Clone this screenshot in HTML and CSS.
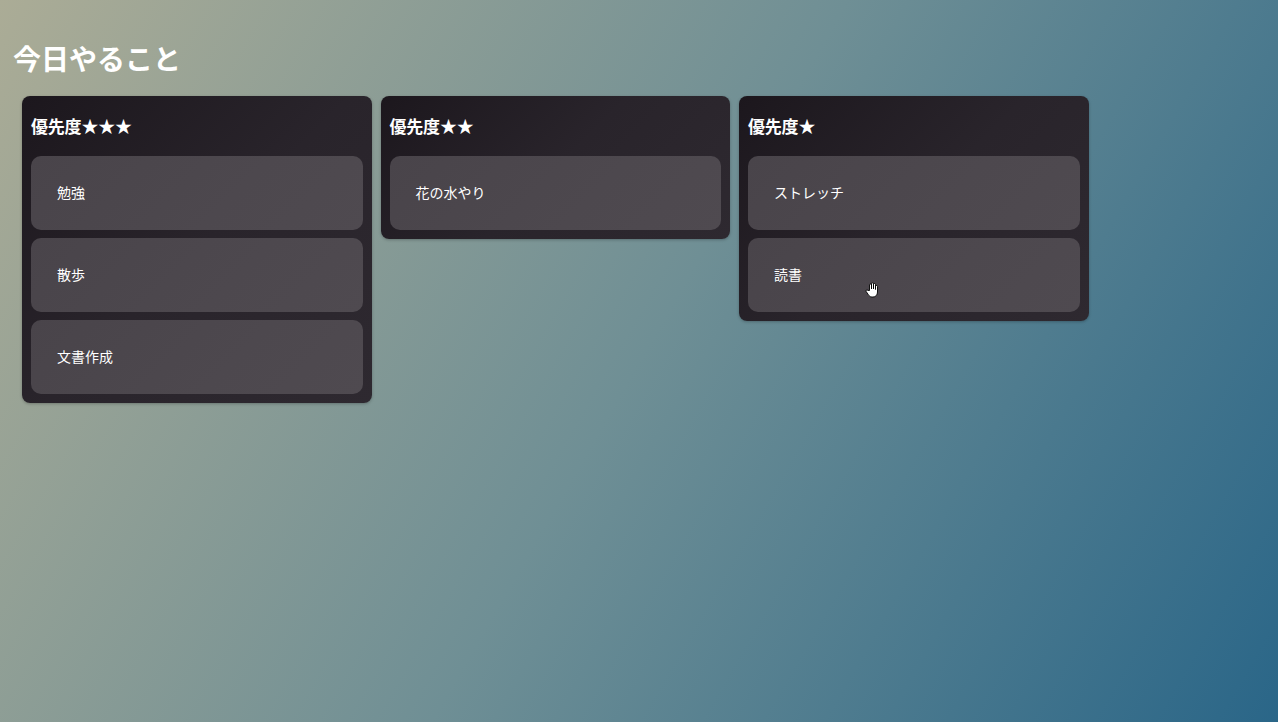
FILE: index.html
```html
<!DOCTYPE html>
<html lang="ja">
<head>
<meta charset="utf-8">
<title>今日やること</title>
<link rel="stylesheet" href="styles.css">
</head>
<body>
<main class="page">
  <h1 class="title">今日やること</h1>
  <div class="board">
    <section class="column">
      <h2 class="column-title">優先度★★★</h2>
      <div class="task">勉強</div>
      <div class="task">散歩</div>
      <div class="task">文書作成</div>
    </section>
    <section class="column">
      <h2 class="column-title">優先度★★</h2>
      <div class="task">花の水やり</div>
    </section>
    <section class="column">
      <h2 class="column-title">優先度★</h2>
      <div class="task">ストレッチ</div>
      <div class="task">読書
        <svg class="cursor" width="14" height="16" viewBox="0 0 14 16" aria-hidden="true">
          <path d="M4.5 8.5 V3 a1 1 0 0 1 2 0 V7 V1.8 a1 1 0 0 1 2 0 V7 V2.5 a1 1 0 0 1 2 0 V7.5 V4.5 a1 1 0 0 1 2 0 V10 c0 3 -1.8 5 -4.5 5 h-1 c-1.8 0 -2.8 -1 -3.8 -2.6 L1.2 9.6 a1 1 0 0 1 1.6 -1.2 Z" fill="#fff" stroke="#000" stroke-width="0.9" stroke-linejoin="round"/>
        </svg>
      </div>
    </section>
  </div>
</main>
</body>
</html>
```
FILE: styles.css
```css
html {
  height: 100%;
  background: linear-gradient(120deg, #abac96 0%, #6f8f95 50%, #2a6688 100%);
}
body {
  margin: 0;
  min-height: 100%;
  font-family: "Noto Sans CJK JP", "Noto Sans", sans-serif;
  color: #fff;
}
.page {
  padding: 0 0 0 13px;
}
.title {
  margin: 0;
  padding-top: 39px;
  font-size: 28px;
  line-height: 38px;
  font-weight: 700;
}
.board {
  display: flex;
  align-items: flex-start;
  gap: 9px;
  margin: 19px 0 0 9px;
}
.column {
  width: 349.5px;
  box-sizing: border-box;
  padding: 9px;
  border-radius: 8px;
  background: linear-gradient(135deg, #1c171d 0%, #29242b 50%, #2e2930 100%);
  box-shadow: 0 1px 3px rgba(0, 0, 0, 0.25);
  display: flex;
  flex-direction: column;
  gap: 8px;
}
.column-title {
  margin: 8px 0 9px 0;
  font-size: 17px;
  line-height: 26px;
  font-weight: 700;
  letter-spacing: -0.2px;
}
.task {
  position: relative;
  height: 74px;
  box-sizing: border-box;
  display: flex;
  align-items: center;
  padding: 0 0 2px 26px;
  border-radius: 10px;
  background: linear-gradient(135deg, #49444a 0%, #4d484e 60%, #4f4a50 100%);
  font-size: 14px;
}
.cursor {
  position: absolute;
  left: 117px;
  top: 44px;
}
```
